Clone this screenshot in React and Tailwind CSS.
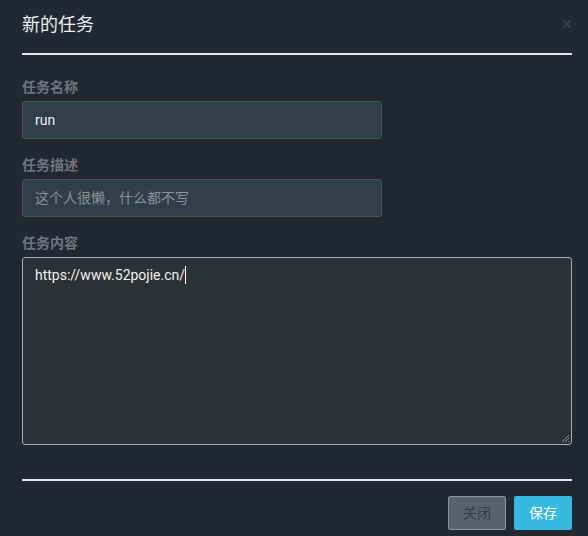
export default function App() {
  return (
    <div className="w-[588px] h-[536px] bg-[#222830] overflow-hidden relative font-['Roboto','Noto_Sans_CJK_SC',sans-serif]">
      <div className="pl-[22px] pr-[16px]">
        <div className="pt-[13px] h-[53px] flex items-start">
          <h1 className="text-[18px] leading-[24px] text-[#eeeeee] font-normal">新的任务</h1>
        </div>
        <div className="h-[2px] bg-[#e6e6e6]" />
        <div className="mt-[22px] flex flex-col">
          <label className="text-[14px] leading-[20px] font-bold text-[#6f757b]">任务名称</label>
          <div className="mt-[4px] w-[360px] h-[38px] rounded-[3px] border border-[#46555f] bg-[#2f3e48] flex items-center px-[12px] text-[14px] text-[#f0f0f0]">
            run
          </div>
          <label className="mt-[16px] text-[14px] leading-[20px] font-bold text-[#6f757b]">任务描述</label>
          <div className="mt-[4px] w-[360px] h-[38px] rounded-[3px] border border-[#46555f] bg-[#2f3e48] flex items-center px-[12px] text-[14px] text-[#8a9298]">
            这个人很懒，什么都不写
          </div>
          <label className="mt-[16px] text-[14px] leading-[20px] font-bold text-[#6f757b]">任务内容</label>
          <div className="mt-[4px] relative h-[188px] rounded-[3px] border border-[#a9abad] bg-[#2d3034] px-[12px] pt-[7px] text-[14px] leading-[20px] text-[#f0f0f0]">
            <span>https://www.52pojie.cn/</span>
            <span className="inline-block w-px h-[18px] bg-white align-middle -mt-[2px]" />
            <svg className="absolute right-[1px] bottom-[1px]" width="10" height="10" viewBox="0 0 10 10">
              <path d="M9 2 L2 9 M9 5 L5 9 M9 8 L8 9" stroke="#8a8d90" strokeWidth="1" />
            </svg>
          </div>
        </div>
        <div className="mt-[34px] h-[2px] bg-[#e6e6e6]" />
        <div className="mt-[15px] flex justify-end gap-[8px]">
          <button className="w-[58px] h-[34px] rounded-[2px] border border-[#8d9399] bg-[#5a6269] text-[14px] text-[#363c42]">关闭</button>
          <button className="w-[58px] h-[34px] rounded-[2px] bg-[#36b9e1] text-[14px] text-white">保存</button>
        </div>
      </div>
      <svg className="absolute left-[562px] top-[19px]" width="10" height="10" viewBox="0 0 10 10">
        <path d="M1 1 L9 9 M9 1 L1 9" stroke="#3a434d" strokeWidth="1.6" />
      </svg>
    </div>
  );
}
